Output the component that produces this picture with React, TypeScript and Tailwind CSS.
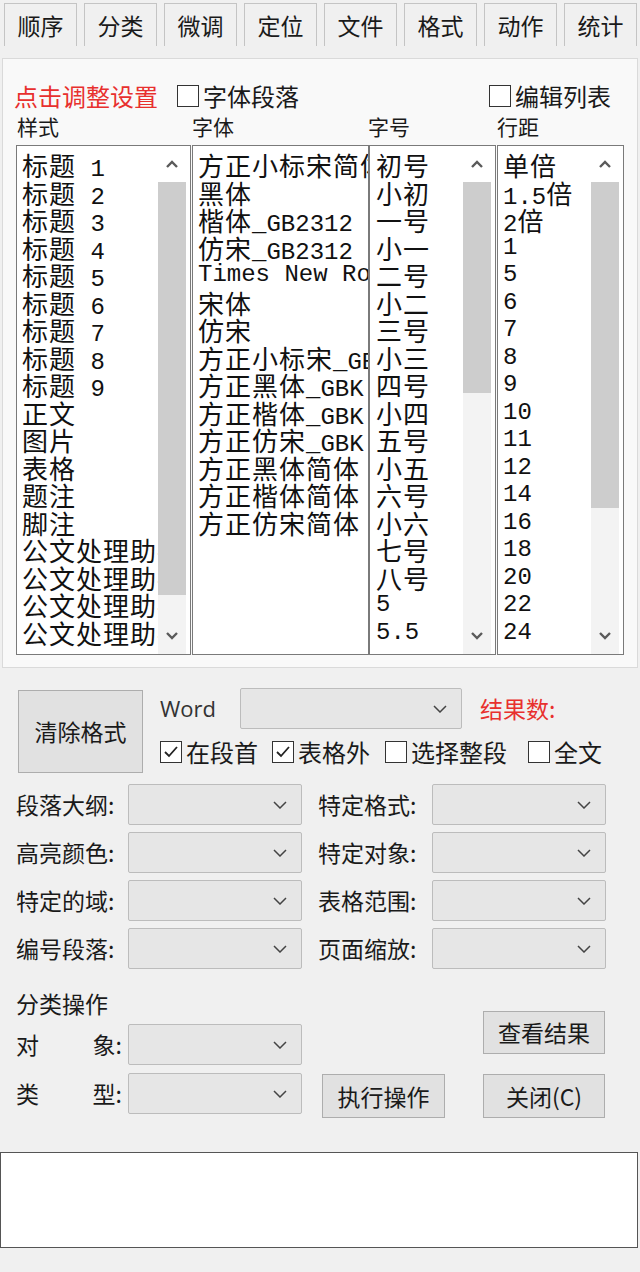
import React from 'react'

const tabs = ['顺序', '分类', '微调', '定位', '文件', '格式', '动作', '统计']

const styles = [
  '标题 1', '标题 2', '标题 3', '标题 4', '标题 5', '标题 6', '标题 7', '标题 8', '标题 9',
  '正文', '图片', '表格', '题注', '脚注', '公文处理助手', '公文处理助手', '公文处理助手', '公文处理助手',
]

const fonts = [
  '方正小标宋简体', '黑体', '楷体_GB2312', '仿宋_GB2312', 'Times New Roman', '宋体', '仿宋',
  '方正小标宋_GBK', '方正黑体_GBK', '方正楷体_GBK', '方正仿宋_GBK', '方正黑体简体', '方正楷体简体', '方正仿宋简体',
]

const sizes = [
  '初号', '小初', '一号', '小一', '二号', '小二', '三号', '小三', '四号', '小四',
  '五号', '小五', '六号', '小六', '七号', '八号', '5', '5.5',
]

const spacings = ['单倍', '1.5倍', '2倍', '1', '5', '6', '7', '8', '9', '10', '11', '12', '14', '16', '18', '20', '22', '24']

const ui = "font-['Noto_Sans_CJK_SC','Noto_Sans',sans-serif]"

// listbox rows: CJK runs and latin runs get their own sizes, like the old SimSun rendering
function Row({ text }: { text: string }) {
  const parts = text.match(/[\x00-\x7f]+|[^\x00-\x7f]+/g) || []
  return (
    <div className="h-[27.5px] leading-[27.5px] whitespace-pre">
      {parts.map((p, i) =>
        /^[\x00-\x7f]+$/.test(p) ? (
          <span key={i} className="font-['Liberation_Mono',monospace] text-[24px]">{p}</span>
        ) : (
          <span key={i} className="font-['Noto_Sans_CJK_SC',sans-serif] text-[26px] tracking-[1px]">{p}</span>
        ),
      )}
    </div>
  )
}

function Arrow({ up }: { up?: boolean }) {
  return (
    <svg width="12" height="8" viewBox="0 0 12 8">
      <polyline
        points={up ? '1,7 6,2 11,7' : '1,1 6,6 11,1'}
        fill="none"
        stroke="#5a5a5a"
        strokeWidth="2.4"
      />
    </svg>
  )
}

function Scrollbar({ thumb }: { thumb: string }) {
  return (
    <div className="w-[28px] mr-[4px] flex flex-col bg-[#f3f3f3]">
      <div className="h-[36px] flex items-center justify-center bg-white">
        <Arrow up />
      </div>
      <div className="flex-1">
        <div className={`bg-[#cdcdcd] ${thumb}`} />
      </div>
      <div className="h-[36px] flex items-center justify-center">
        <Arrow />
      </div>
    </div>
  )
}

function ListBox({ items, width, thumb, pl = 'pl-[5px]' }: { items: string[]; width: string; thumb?: string; pl?: string }) {
  return (
    <div className={`${width} h-[510px] border border-[#7a7a7a] bg-white flex text-[#111]`}>
      <div className={`flex-1 overflow-hidden pt-[5px] ${pl}`}>
        {items.map((t, i) => (
          <Row key={i} text={t} />
        ))}
      </div>
      {thumb && <Scrollbar thumb={thumb} />}
    </div>
  )
}

function Check({ label, checked }: { label: string; checked?: boolean }) {
  return (
    <div className="flex items-center gap-[4px]">
      <div className="w-[22px] h-[22px] border-[1.5px] border-[#333] bg-white flex items-center justify-center">
        {checked && (
          <svg width="16" height="14" viewBox="0 0 16 14">
            <polyline points="2,7 6,11 14,2" fill="none" stroke="#222" strokeWidth="1.8" />
          </svg>
        )}
      </div>
      <span>{label}</span>
    </div>
  )
}

function Combo({ width = 'w-[174px]' }: { width?: string }) {
  return (
    <div className={`${width} h-[41px] border border-[#bcbcbc] rounded-[2px] bg-[#e6e6e6] flex items-center justify-end pr-[14px]`}>
      <svg width="14" height="8" viewBox="0 0 14 8">
        <polyline points="1,1 7,7 13,1" fill="none" stroke="#444" strokeWidth="1.5" />
      </svg>
    </div>
  )
}

function Button({ label, className }: { label: string; className: string }) {
  return (
    <div className={`border border-[#adadad] bg-[#e1e1e1] flex items-center justify-center text-[23px] text-[#1a1a1a] ${className}`}>
      {label}
    </div>
  )
}

function Field({ label, labelWidth }: { label: string; labelWidth: string }) {
  return (
    <div className="flex items-center">
      <span className={`${labelWidth} whitespace-nowrap`}>{label}</span>
      <Combo />
    </div>
  )
}

export default function App() {
  return (
    <div className={`w-[640px] h-[1272px] bg-[#f0f0f0] text-[#1a1a1a] overflow-hidden ${ui}`}>
      {/* tab strip */}
      <div className="flex gap-[7px] pl-[4px] pt-[3px]">
        {tabs.map(t => (
          <div
            key={t}
            className="w-[73px] h-[43px] border border-b-0 border-[#c4c4c4] bg-[#f0f0f0] flex items-center justify-center text-[23px] text-[#1a1a1a]"
          >
            {t}
          </div>
        ))}
      </div>

      {/* tab page */}
      <div className="mt-[12px] mx-[2px] h-[610px] border border-[#dadada] bg-[#f9f9f9] pl-[13px] pr-[12px] pt-[24px]">
        <div className="h-[26px] flex items-center text-[24px]">
          <span className="-ml-[2px] text-[#e8302e]">点击调整设置</span>
          <div className="ml-[19px]">
            <Check label="字体段落" />
          </div>
          <div className="ml-auto mr-[14px]">
            <Check label="编辑列表" />
          </div>
        </div>

        <div className="mt-[5px] h-[26px] flex items-center text-[21px]">
          <span className="w-[176px] pl-[1px]">样式</span>
          <span className="w-[176px]">字体</span>
          <span className="w-[129px]">字号</span>
          <span>行距</span>
        </div>

        <div className="mt-[5px] flex">
          <ListBox items={styles} width="w-[175px]" thumb="h-[413px]" />
          <div className="w-[1px]" />
          <ListBox items={fonts} width="w-[177px]" />
          <ListBox items={sizes} width="w-[127px]" thumb="h-[211px]" pl="pl-[6px]" />
          <div className="w-[1px]" />
          <ListBox items={spacings} width="w-[127px]" thumb="h-[326px]" />
        </div>
      </div>

      {/* search options */}
      <div className="pl-[16px] text-[23px]">
        <div className="mt-[20px] flex">
          <Button label="清除格式" className="ml-[2px] mt-[2px] w-[125px] h-[83px]" />
          <div className="ml-[17px]">
            <div className="h-[41px] flex items-center">
              <span className="w-[80px] font-['Open_Sans',sans-serif] text-[22px] text-[#333]">Word</span>
              <Combo width="w-[222px]" />
              <span className="ml-[18px] text-[#e8302e]">结果数:</span>
            </div>
            <div className="mt-[11px] h-[24px] leading-[24px] flex items-center text-[24px]">
              <Check label="在段首" checked />
              <div className="ml-[14px]">
                <Check label="表格外" checked />
              </div>
              <div className="ml-[15px]">
                <Check label="选择整段" />
              </div>
              <div className="ml-[21px]">
                <Check label="全文" />
              </div>
            </div>
          </div>
        </div>

        <div className="mt-[11px] flex flex-col gap-[7px]">
          {[
            ['段落大纲:', '特定格式:'],
            ['高亮颜色:', '特定对象:'],
            ['特定的域:', '表格范围:'],
            ['编号段落:', '页面缩放:'],
          ].map(([a, b]) => (
            <div key={a} className="flex">
              <Field label={a} labelWidth="w-[112px]" />
              <div className="ml-[16px]">
                <Field label={b} labelWidth="w-[114px]" />
              </div>
            </div>
          ))}
        </div>

        {/* classify actions */}
        <div className="mt-[19px] flex">
          <div className="w-[286px]">
            <div className="h-[30px] flex items-center">分类操作</div>
            <div className="mt-[6px] flex items-center">
              <span className="w-[112px] pr-[6px] flex justify-between">
                <span>对</span>
                <span>象:</span>
              </span>
              <Combo />
            </div>
            <div className="mt-[8px] flex items-center">
              <span className="w-[112px] pr-[6px] flex justify-between">
                <span>类</span>
                <span>型:</span>
              </span>
              <Combo />
            </div>
          </div>
          <div className="ml-[20px] mt-[86px]">
            <Button label="执行操作" className="w-[123px] h-[44px]" />
          </div>
          <div className="ml-[38px] flex flex-col">
            <Button label="查看结果" className="mt-[23px] w-[122px] h-[43px]" />
            <Button label="关闭(C)" className="mt-[20px] w-[122px] h-[44px]" />
          </div>
        </div>
      </div>

      {/* result output */}
      <div className="mt-[34px] w-[638px] h-[96px] border-[1.5px] border-[#555] bg-white" />
    </div>
  )
}
